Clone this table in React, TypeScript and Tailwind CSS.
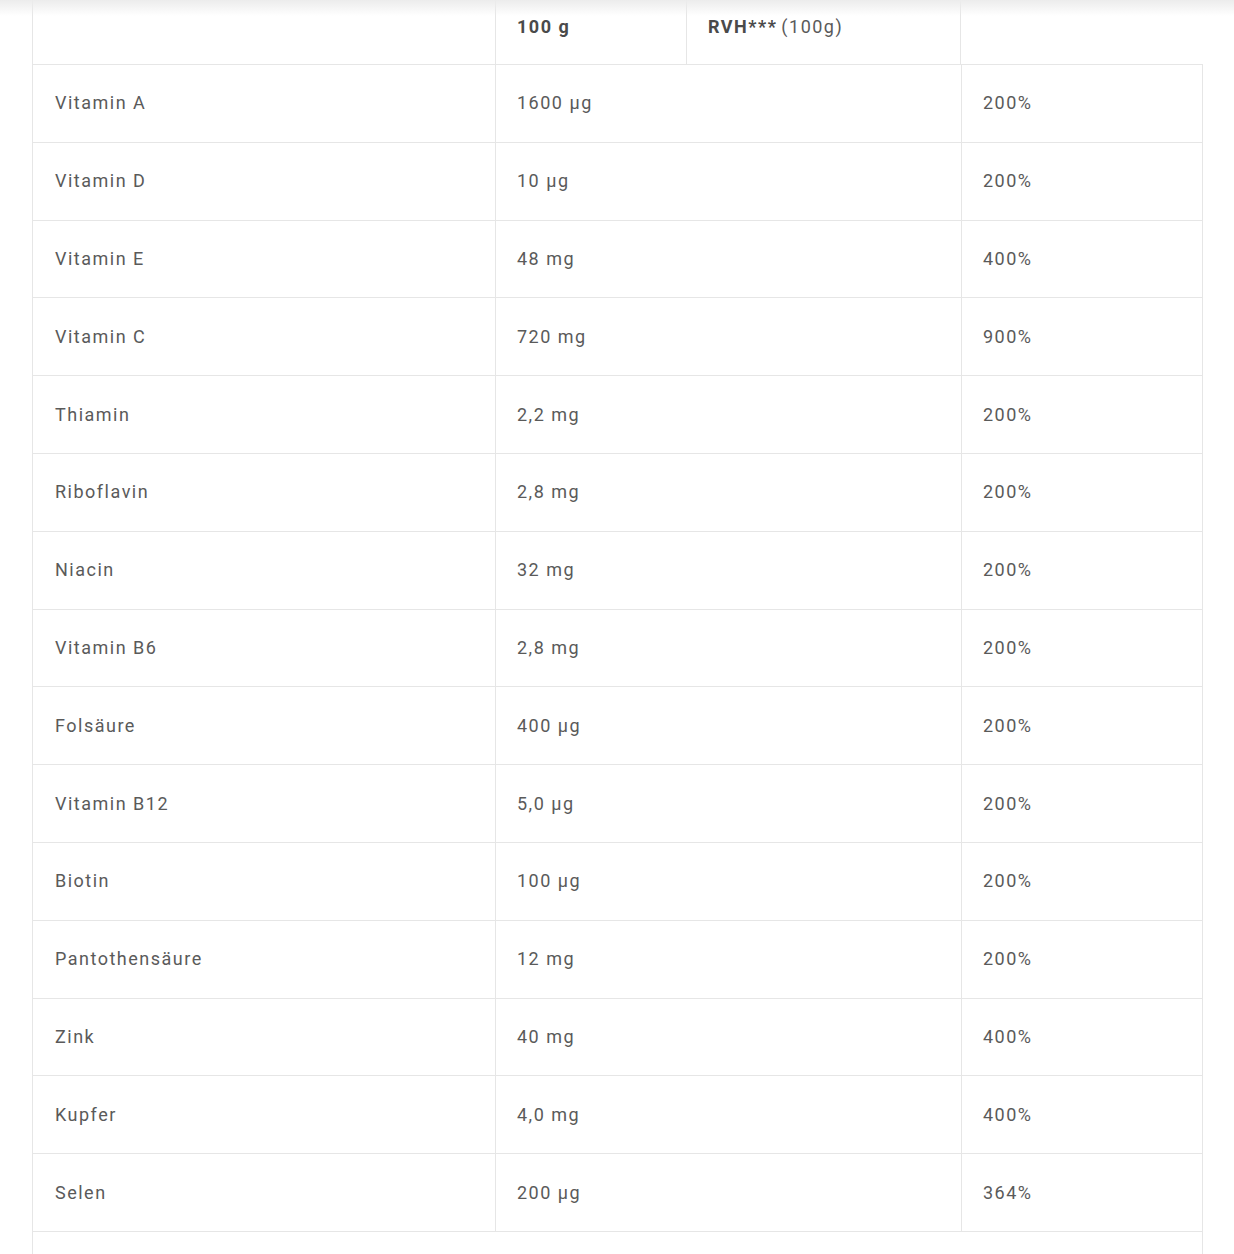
const rows: [string, string, string][] = [
  ['Vitamin A', '1600 µg', '200%'],
  ['Vitamin D', '10 µg', '200%'],
  ['Vitamin E', '48 mg', '400%'],
  ['Vitamin C', '720 mg', '900%'],
  ['Thiamin', '2,2 mg', '200%'],
  ['Riboflavin', '2,8 mg', '200%'],
  ['Niacin', '32 mg', '200%'],
  ['Vitamin B6', '2,8 mg', '200%'],
  ['Folsäure', '400 µg', '200%'],
  ['Vitamin B12', '5,0 µg', '200%'],
  ['Biotin', '100 µg', '200%'],
  ['Pantothensäure', '12 mg', '200%'],
  ['Zink', '40 mg', '400%'],
  ['Kupfer', '4,0 mg', '400%'],
  ['Selen', '200 µg', '364%'],
];

export default function App() {
  return (
    <div className="relative h-[1254px] w-[1234px] overflow-hidden bg-white font-['Roboto',sans-serif] text-[18px] tracking-[1.5px] text-[#5a5a5a]">
      <div className="pointer-events-none absolute inset-x-0 top-0 h-4 bg-gradient-to-b from-[#ececec] to-transparent" />
      <div className="ml-[32px] w-[1171px]">
        {/* header */}
        <div className="flex h-[65px] border-b border-[#e6e6e6]">
          <div className="w-[463px] border-l border-[#e6e6e6]" />
          <div className="flex w-[191px] items-start border-l border-[#e6e6e6] pl-[21px] pt-[13px] font-bold text-[#4a4a4a]">100 g</div>
          <div className="flex w-[275px] items-start border-l border-r border-[#e6e6e6] pl-[21px] pt-[13px]">
            <span className="font-bold text-[#4a4a4a]">RVH***</span>
            <span className="ml-1">(100g)</span>
          </div>
        </div>
        {rows.map(([name, amount, pct]) => (
          <div key={name} className="flex h-[77.8px] border-b border-[#e6e6e6]">
            <div className="flex w-[463px] items-center border-l border-[#e6e6e6] pl-[22px] pb-[1px]">{name}</div>
            <div className="flex w-[466px] items-center border-l border-[#e6e6e6] pl-[21px] pb-[1px]">{amount}</div>
            <div className="flex w-[242px] items-center border-l border-r border-[#e6e6e6] pl-[21px] pb-[1px]">{pct}</div>
          </div>
        ))}
        <div className="h-[40px] border-l border-r border-[#e6e6e6]" />
      </div>
    </div>
  );
}
